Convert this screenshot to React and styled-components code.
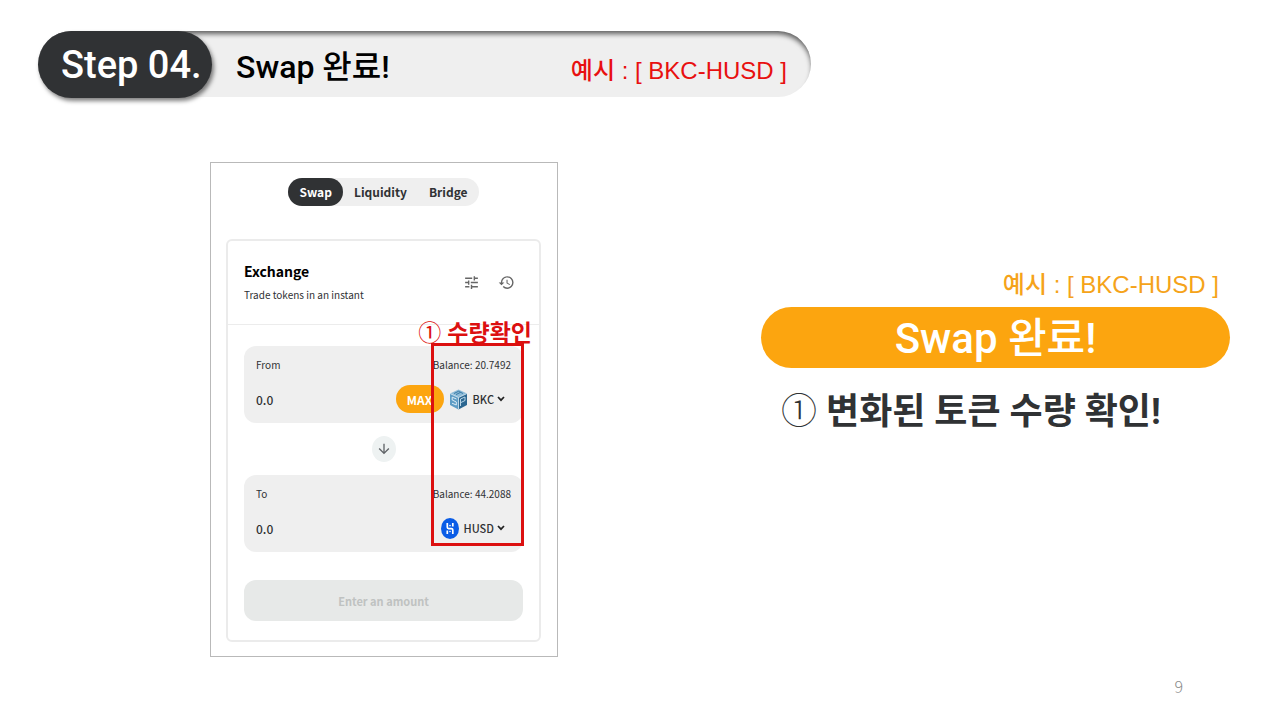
import React, { useState } from 'react';
import styled, { createGlobalStyle } from 'styled-components';
import { MdHistory, MdTune, MdArrowDownward } from 'react-icons/md';

const GlobalStyle = createGlobalStyle`
  * {
    box-sizing: border-box;
  }

  body {
    margin: 0;
    background: #ffffff;
    color: #303234;
    font-family: Roboto, "Noto Sans CJK KR", sans-serif;
  }

  h1, h2, h3, p {
    margin: 0;
  }

  button, input {
    font-family: inherit;
    border: 0;
    padding: 0;
    background: none;
    color: inherit;
  }
`;

const Slide = styled.div`
  display: flex;
  flex-direction: column;
  min-height: 100vh;
  padding: 31px 50px 20px 38px;
`;

const HeaderRow = styled.div`
  display: grid;
  grid-template-columns: 773fr 419fr;
`;

const Header = styled.header`
  display: flex;
  align-items: center;
  height: 66px;
  padding-right: 24px;
  border-radius: 33px;
  background: #efefef;
  box-shadow: inset -1px 5px 5px -2px rgba(0, 0, 0, 0.6);
`;

const StepBadge = styled.div`
  flex: none;
  width: 174px;
  padding: 2px 0 0 23px;
  border-radius: 34px;
  background: #303234;
  box-shadow: 2px 3px 4px rgba(0, 0, 0, 0.5);
  color: #ffffff;
  font-size: 38px;
  font-weight: 500;
  line-height: 65px;
  white-space: nowrap;
`;

const Title = styled.h1`
  flex: 1;
  padding: 6px 0 0 24px;
  color: #000000;
  font-size: 32px;
  font-weight: 500;
  line-height: 60px;
  white-space: nowrap;
`;

const Example = styled.p`
  padding-top: ${({ $top }) => $top || 0}px;
  color: ${({ $color }) => $color};
  font-family: "Liberation Sans", "Noto Sans CJK KR", sans-serif;
  font-size: 24px;
  font-weight: 500;
  line-height: 34px;
  white-space: nowrap;
`;

const Main = styled.main`
  display: grid;
  grid-template-columns: 172fr 348fr 203fr 469fr;
  align-items: start;
  margin-top: 65px;
`;

const AppFrame = styled.section`
  grid-column: 2;
  padding: 15px 16px 14px 15px;
  border: 1px solid #b9b9b9;
  font-family: "Noto Sans CJK KR", sans-serif;
`;

const Tabs = styled.nav`
  display: flex;
  width: fit-content;
  margin: 0 auto;
  border-radius: 14px;
  background: #efefef;
`;

const Tab = styled.a`
  padding: 0 11px;
  border-radius: 14px;
  background: ${({ $active }) => ($active ? '#303234' : 'transparent')};
  color: ${({ $active }) => ($active ? '#ffffff' : '#303234')};
  font-size: 12px;
  font-weight: 700;
  line-height: 28px;
  text-decoration: none;
`;

const Card = styled.div`
  margin-top: 33px;
  border: 2px solid #ebebeb;
  border-radius: 6px;
`;

const CardHeader = styled.div`
  display: flex;
  align-items: center;
  justify-content: space-between;
  height: 84px;
  padding: 0 24px 0 16px;
  border-bottom: 1px solid #ececec;
`;

const CardTitle = styled.h2`
  color: #000000;
  font-size: 14px;
  font-weight: 700;
  line-height: 24px;
`;

const CardSubtitle = styled.p`
  font-size: 10px;
  line-height: 24px;
`;

const Actions = styled.div`
  display: flex;
  gap: 18px;
`;

const IconButton = styled.button`
  display: flex;
  color: #666666;
  font-size: 17px;
`;

const CardBody = styled.div`
  padding: 21px 16px 19px;
`;

const Fields = styled.div`
  position: relative;
  display: flex;
  flex-direction: column;
`;

const Field = styled.div`
  height: 77px;
  padding: 8px 12px 0;
  border-radius: 12px;
  background: #efefef;
`;

const FieldTop = styled.div`
  display: flex;
  justify-content: space-between;
  font-size: 10px;
  line-height: 22px;
`;

const FieldRow = styled.div`
  display: flex;
  align-items: center;
  height: 46px;
  padding-right: 4px;
`;

const AmountInput = styled.input`
  flex: 1;
  min-width: 0;
  font-size: 12px;
  font-weight: 500;
  outline: none;
`;

const MaxButton = styled.button`
  width: 48px;
  height: 28px;
  margin-right: 5px;
  border-radius: 14px;
  background: #fca50f;
  color: #ffffff;
  font-size: 12px;
  font-weight: 700;
`;

const TokenButton = styled.button`
  display: flex;
  align-items: center;
  font-size: 11px;
  font-weight: 500;

  svg:first-child {
    margin-right: 5px;
  }

  svg:last-child {
    margin: 0 2px 0 3px;
  }
`;

const SwitchButton = styled.button`
  display: flex;
  align-items: center;
  justify-content: center;
  align-self: center;
  width: 24px;
  height: 26px;
  margin: 13px 0;
  border-radius: 50%;
  background: #eef2f2;
  color: #606468;
  font-size: 16px;
`;

const SubmitButton = styled.button`
  width: 100%;
  height: 41px;
  margin-top: 28px;
  border-radius: 12px;
  background: #e7e9e8;
  color: #bfc2c1;
  font-size: 11px;
  font-weight: 700;
`;

const Highlight = styled.div`
  position: absolute;
  top: -3px;
  right: -1px;
  bottom: 6px;
  width: 93px;
  border: 3px solid #dc1010;
  pointer-events: none;
`;

const HighlightLabel = styled.p`
  position: absolute;
  right: -11px;
  bottom: 100%;
  padding-bottom: 3px;
  color: #dc1010;
  font-size: 23px;
  font-weight: 700;
  line-height: 24px;
  white-space: nowrap;
`;

const Num = styled.span`
  margin-right: ${({ $gap }) => $gap}px;
  font-weight: ${({ $weight }) => $weight || 400};
`;

const Summary = styled.section`
  grid-column: 4;
  display: flex;
  flex-direction: column;
  padding-top: 106px;
`;

const ExampleLine = styled.div`
  align-self: flex-end;
  padding-right: 11px;
`;

const Banner = styled.h2`
  padding-top: 2px;
  margin-top: 5px;
  border-radius: 31px;
  background: #fca50f;
  color: #ffffff;
  font-size: 42px;
  font-weight: 500;
  line-height: 59px;
  text-align: center;
`;

const Note = styled.h3`
  padding-left: 20px;
  margin-top: 16px;
  font-size: 36px;
  font-weight: 700;
  line-height: 56px;
  white-space: nowrap;
`;

const PageNumber = styled.footer`
  margin-top: auto;
  padding-right: 47px;
  color: #8b8b8b;
  font-family: "Noto Sans CJK KR", sans-serif;
  font-size: 16px;
  font-weight: 300;
  line-height: 28px;
  text-align: right;
`;

const BkcIcon = () => (
  <svg width="19" height="21" viewBox="0 0 19 21" aria-hidden="true">
    <path d="M9.5 0.5 18 4.5 9.5 8.5 1 4.5Z" fill="#8dbbd8" />
    <path d="M1 4.5 9.5 8.5V20.5L1 16Z" fill="#5d9cc5" />
    <path d="M18 4.5 9.5 8.5V20.5L18 16Z" fill="#2b6791" />
    <path d="M5 4.5 9.5 2.3 14 4.5M7 5.6 11.5 3.4" stroke="#3c7ca6" fill="none" />
    <path d="M7.5 10 3.2 8.2V11L7.3 13V16L3 14.2" stroke="#dcebf4" fill="none" />
    <path d="M11.5 17V10L16 8V11.5L12 13.5" stroke="#b9d6e8" fill="none" />
    <path d="M1 4.5 9.5 8.5 18 4.5M9.5 8.5V20" stroke="#d2e5f0" strokeWidth="0.8" fill="none" />
  </svg>
);

const HusdIcon = () => (
  <svg width="18" height="21" viewBox="0 0 18 21" aria-hidden="true">
    <ellipse cx="9" cy="10.5" rx="9" ry="10.5" fill="#0a5ce6" />
    <path d="M6.3 5V9.3Q6.3 10.6 7.6 10.6H10.4Q11.8 10.6 11.8 12V16" stroke="#ffffff" strokeWidth="1.7" fill="none" />
    <path d="M6.3 12.6V16M11.8 5V8.4" stroke="#ffffff" strokeWidth="1.7" />
    <circle cx="9" cy="7.6" r="0.8" fill="#ffffff" />
    <circle cx="9" cy="13.5" r="0.8" fill="#ffffff" />
  </svg>
);

const Chevron = () => (
  <svg width="8" height="6" viewBox="0 0 8 6" aria-hidden="true">
    <path d="M1 1 4 4.2 7 1" stroke="#222222" strokeWidth="1.7" fill="none" />
  </svg>
);

const TokenField = ({ id, label, balance, token, icon, showMax }) => {
  const [amount, setAmount] = useState('0.0');

  return (
    <Field>
      <FieldTop>
        <label htmlFor={id}>{label}</label>
        <span>Balance: {balance}</span>
      </FieldTop>
      <FieldRow>
        <AmountInput
          id={id}
          value={amount}
          inputMode="decimal"
          onChange={(e) => setAmount(e.target.value)}
        />
        {showMax && <MaxButton type="button">MAX</MaxButton>}
        <TokenButton type="button" aria-haspopup="dialog">
          {icon}
          {token}
          <Chevron />
        </TokenButton>
      </FieldRow>
    </Field>
  );
};

const tabs = ['Swap', 'Liquidity', 'Bridge'];

const App = () => (
  <Slide>
    <GlobalStyle />
    <HeaderRow>
      <Header>
        <StepBadge>Step 04.</StepBadge>
        <Title>Swap 완료!</Title>
        <Example $color="#e81010" $top={14}>예시 : [ BKC-HUSD ]</Example>
      </Header>
    </HeaderRow>

    <Main>
      <AppFrame>
        <Tabs>
          {tabs.map((tab, i) => (
            <Tab key={tab} href={`#${tab.toLowerCase()}`} $active={i === 0}>{tab}</Tab>
          ))}
        </Tabs>
        <Card>
          <CardHeader>
            <div>
              <CardTitle>Exchange</CardTitle>
              <CardSubtitle>Trade tokens in an instant</CardSubtitle>
            </div>
            <Actions>
              <IconButton type="button" aria-label="Settings"><MdTune /></IconButton>
              <IconButton type="button" aria-label="History"><MdHistory /></IconButton>
            </Actions>
          </CardHeader>
          <CardBody>
            <Fields>
              <TokenField id="from" label="From" balance="20.7492" token="BKC" icon={<BkcIcon />} showMax />
              <SwitchButton type="button" aria-label="Switch tokens"><MdArrowDownward /></SwitchButton>
              <TokenField id="to" label="To" balance="44.2088" token="HUSD" icon={<HusdIcon />} />
              <Highlight>
                <HighlightLabel><Num $gap={6}>①</Num>수량확인</HighlightLabel>
              </Highlight>
            </Fields>
            <SubmitButton type="button" disabled>Enter an amount</SubmitButton>
          </CardBody>
        </Card>
      </AppFrame>

      <Summary>
        <ExampleLine>
          <Example $color="#f5a31a">예시 : [ BKC-HUSD ]</Example>
        </ExampleLine>
        <Banner>Swap 완료!</Banner>
        <Note><Num $gap={9} $weight={300}>①</Num>변화된 토큰 수량 확인!</Note>
      </Summary>
    </Main>

    <PageNumber>9</PageNumber>
  </Slide>
);

export default App;
